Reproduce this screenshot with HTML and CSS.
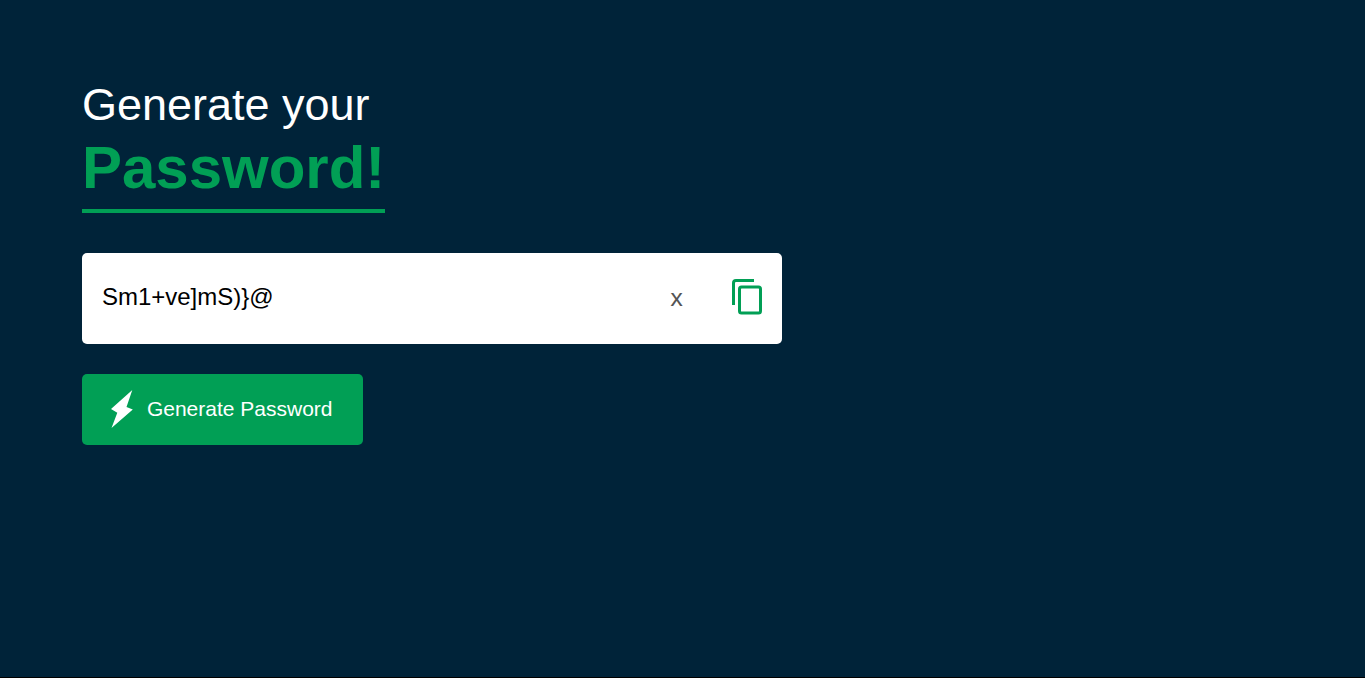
FILE: index.html
```html
<!DOCTYPE html>
<html lang="en">
<head>
  <meta charset="utf-8">
  <meta name="viewport" content="width=device-width, initial-scale=1">
  <title>Password Generator</title>
  <link rel="stylesheet" href="styles.css">
</head>
<body>
  <main class="container">
    <h1 class="title">Generate your<br><span class="title-accent">Password!</span></h1>
    <div class="display">
      <input class="password" type="text" value="Sm1+ve]mS)}@" aria-label="Password" readonly>
      <button class="clear" type="button" aria-label="Clear password">x</button>
      <button class="copy" type="button" aria-label="Copy password">
        <svg class="copy-icon" viewBox="0 0 32 36" fill="none" stroke="currentColor" stroke-width="3" aria-hidden="true">
          <path d="M2.500 26V4Q2.500 1.500 5 1.500H23"/>
          <rect x="8.500" y="8" width="21" height="26" rx="2"/>
        </svg>
      </button>
    </div>
    <button class="generate" type="button">
      <svg class="bolt-icon" viewBox="0 0 22 38" fill="currentColor" aria-hidden="true">
        <path d="M21.300 0L0 19L6.300 22.800L.5 38L21.800 19.500L15.500 17Z"/>
      </svg>
      Generate Password
    </button>
  </main>
</body>
</html>
```
FILE: styles.css
```css
* {
  box-sizing: border-box;
  margin: 0;
  padding: 0;
}

body {
  min-height: 100vh;
  background: #002339;
  border-bottom: 1px solid #000;
  font-family: "Liberation Sans", Arial, sans-serif;
}

button {
  border: 0;
  background: none;
  font-family: inherit;
  cursor: pointer;
}

.container {
  width: 88%;
  margin: 0 auto;
  padding: 79px 0 40px;
}

.title {
  color: #fff;
  font-size: 45px;
  font-weight: 400;
  line-height: 52px;
}

.title-accent {
  display: inline-block;
  padding: 2px 0 6px;
  border-bottom: 4px solid #019f55;
  color: #019f55;
  font-size: 60px;
  font-weight: 700;
  line-height: 70px;
}

.display {
  display: flex;
  align-items: center;
  width: 100%;
  max-width: 700px;
  margin: 40px 0 30px;
  padding: 24px 19px 28px 20px;
  border-radius: 5px;
  background: #fff;
}

.password {
  flex: 1;
  min-width: 0;
  height: 39px;
  border: 0;
  outline: 0;
  background: transparent;
  color: #000;
  font-family: inherit;
  font-size: 24px;
}

.clear {
  padding: 0 48px 0 12px;
  color: #555;
  font-family: "Noto Sans", sans-serif;
  font-size: 24px;
  line-height: 38px;
}

.copy {
  display: flex;
  color: #019f55;
}

.copy-icon {
  width: 32px;
  height: 36px;
}

.generate {
  display: flex;
  align-items: center;
  gap: 14px;
  padding: 15px 30px 17px 29px;
  border-radius: 5px;
  background: #019f55;
  color: #fff;
  font-size: 21px;
  line-height: 39px;
}

.bolt-icon {
  width: 22px;
  height: 38px;
}
```
